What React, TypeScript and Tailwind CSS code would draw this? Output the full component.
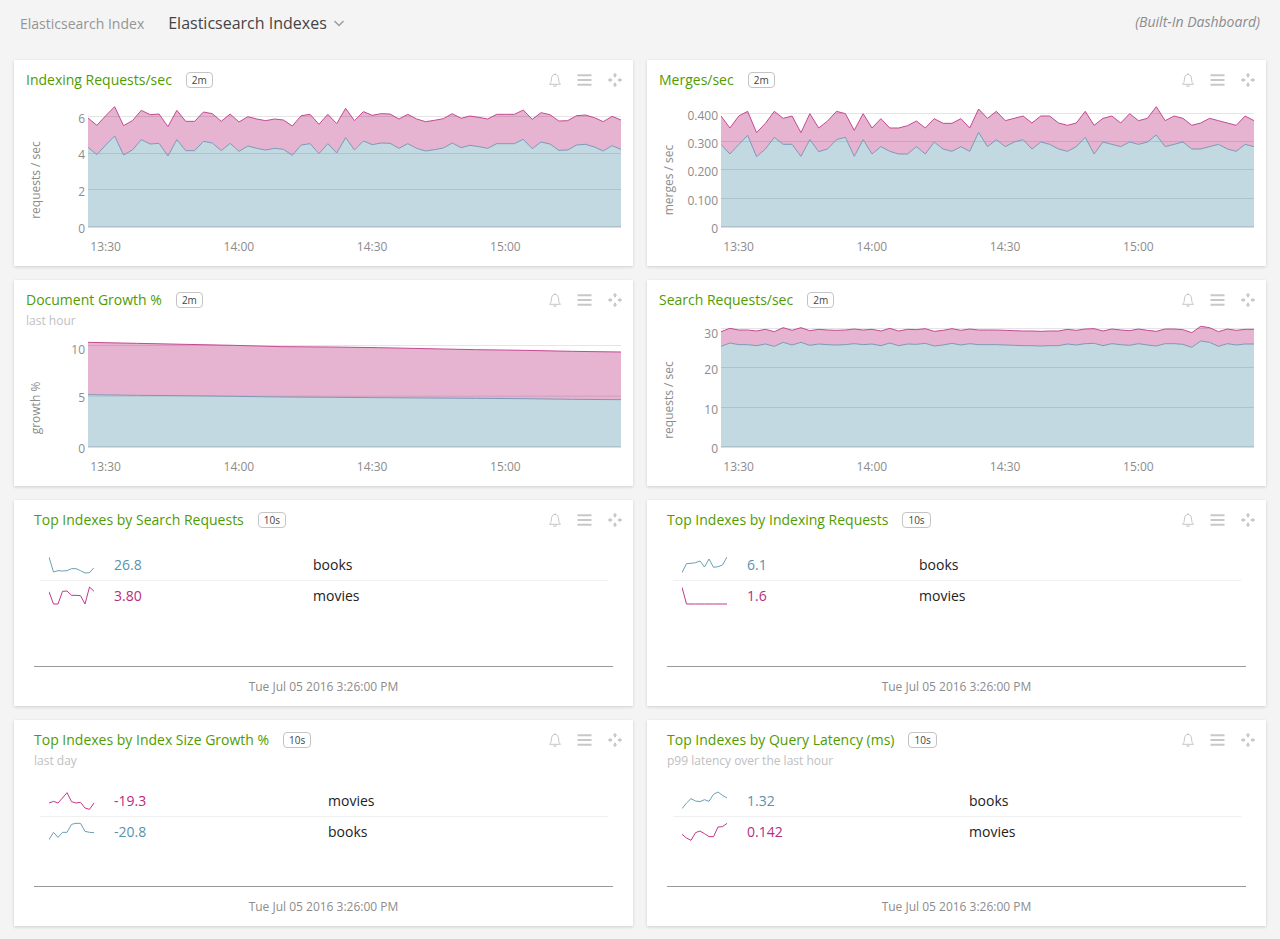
import React from "react";

type Tick = { label: string; line: number; text: number };

type ChartCardProps = {
  title: string;
  subtitle?: string;
  unit: string;
  ticks: Tick[];
  upper: number[];
  lower: number[];
};

type Row = { name: string; value: string; color: "pink" | "blue"; trend: number[] };

type ListCardProps = {
  title: string;
  subtitle?: string;
  rows: Row[];
  valueWidth: string;
};

/* Chart heights are measured in thirds of a pixel from the card's top edge. */
const BASE = 501;

const indexingTop = [
  174, 196, 167, 140, 197, 182, 151, 164, 162, 200, 151, 184, 184, 156, 161, 184, 162, 186, 170, 177,
  182, 177, 180, 198, 167, 163, 193, 163, 191, 145, 182, 155, 166, 161, 162, 177, 163, 177, 185, 181,
  176, 161, 175, 168, 172, 177, 163, 163, 163, 150, 178, 158, 164, 183, 182, 167, 165, 173, 185, 169,
  180,
];

const mergesTop = [
  168, 204, 168, 154, 218, 190, 154, 175, 168, 218, 161, 204, 183, 154, 161, 211, 161, 204, 176, 204,
  204, 197, 183, 204, 176, 190, 190, 176, 204, 147, 175, 154, 182, 175, 168, 189, 168, 168, 189, 196,
  189, 154, 196, 175, 168, 189, 161, 182, 175, 140, 182, 168, 175, 196, 189, 175, 182, 189, 196, 168,
  182,
];

const mergesBottom = [
  253, 282, 254, 226, 290, 267, 232, 253, 253, 289, 239, 275, 267, 239, 232, 289, 239, 282, 260, 274,
  282, 282, 260, 282, 246, 267, 274, 260, 274, 217, 260, 239, 260, 246, 239, 267, 246, 253, 267, 274,
  260, 232, 282, 246, 253, 260, 246, 253, 246, 225, 260, 253, 246, 267, 267, 260, 253, 267, 274, 253,
  260,
];

const searchTop = [
  155, 145, 150, 150, 153, 148, 155, 143, 151, 143, 152, 148, 150, 151, 150, 147, 150, 148, 153, 145,
  153, 148, 149, 146, 154, 151, 146, 151, 147, 150, 150, 150, 151, 152, 153, 153, 154, 153, 153, 148,
  151, 147, 146, 153, 147, 150, 152, 147, 151, 154, 147, 147, 149, 158, 139, 143, 155, 147, 151, 148,
  148,
];

const growthTop = [187, 190, 193, 196, 200, 201, 203, 206, 209, 211, 214, 216];
const growthBottom = [344, 346, 347, 349, 351, 352, 353, 354, 355, 356, 358, 359];

const charts: ChartCardProps[] = [
  {
    title: "Indexing Requests/sec",
    unit: "requests / sec",
    ticks: [
      { label: "6", line: 169, text: 63 },
      { label: "4", line: 280, text: 99 },
      { label: "2", line: 388, text: 136 },
      { label: "0", line: 499, text: 173 },
    ],
    upper: indexingTop,
    lower: indexingTop.map((y) => y + 88),
  },
  {
    title: "Merges/sec",
    unit: "merges / sec",
    ticks: [
      { label: "0.400", line: 160, text: 60 },
      { label: "0.300", line: 244, text: 88 },
      { label: "0.200", line: 328, text: 116 },
      { label: "0.100", line: 415, text: 145 },
      { label: "0", line: 499, text: 173 },
    ],
    upper: mergesTop,
    lower: mergesBottom,
  },
  {
    title: "Document Growth %",
    subtitle: "last hour",
    unit: "growth %",
    ticks: [
      { label: "10", line: 196, text: 74 },
      { label: "5", line: 348, text: 122 },
      { label: "0", line: 499, text: 173 },
    ],
    upper: growthTop,
    lower: growthBottom,
  },
  {
    title: "Search Requests/sec",
    unit: "requests / sec",
    ticks: [
      { label: "30", line: 145, text: 58 },
      { label: "20", line: 262, text: 94 },
      { label: "10", line: 382, text: 134 },
      { label: "0", line: 499, text: 173 },
    ],
    upper: searchTop,
    lower: searchTop.map((y) => y + 44),
  },
];

const lists: ListCardProps[] = [
  {
    title: "Top Indexes by Search Requests",
    valueWidth: "w-[199px]",
    rows: [
      { name: "books", value: "26.8", color: "blue", trend: [6, 51, 47, 48, 47, 41, 41, 47, 54, 53, 38] },
      { name: "movies", value: "3.80", color: "pink", trend: [17, 54, 54, 16, 15, 28, 28, 29, 54, 3, 16] },
    ],
  },
  {
    title: "Top Indexes by Indexing Requests",
    valueWidth: "w-[172px]",
    rows: [
      { name: "books", value: "6.1", color: "blue", trend: [53, 26, 25, 23, 18, 36, 12, 37, 35, 30, 6] },
      { name: "movies", value: "1.6", color: "pink", trend: [4, 54, 54, 54, 54, 54, 54, 54, 54, 54, 54] },
    ],
  },
  {
    title: "Top Indexes by Index Size Growth %",
    subtitle: "last day",
    valueWidth: "w-[214px]",
    rows: [
      { name: "movies", value: "-19.3", color: "pink", trend: [36, 31, 36, 21, 5, 32, 36, 34, 51, 55, 36] },
      { name: "books", value: "-20.8", color: "blue", trend: [53, 31, 46, 31, 31, 7, 4, 4, 28, 31, 32] },
    ],
  },
  {
    title: "Top Indexes by Query Latency (ms)",
    subtitle: "p99 latency over the last hour",
    valueWidth: "w-[222px]",
    rows: [
      { name: "books", value: "1.32", color: "blue", trend: [53, 36, 23, 30, 32, 26, 31, 10, 3, 13, 21] },
      { name: "movies", value: "0.142", color: "pink", trend: [37, 48, 55, 32, 27, 35, 44, 44, 15, 14, 4] },
    ],
  },
];

function BellIcon() {
  return (
    <svg width="14" height="16" viewBox="0 0 14 16" fill="none" stroke="#c6c6c6" aria-hidden="true">
      <path d="M7 1.2v1M1.5 12.3h11c-1.100-1-1.700-2-1.800-4.300-.1-3.300-1.200-5.600-3.700-5.600S3.400 4.700 3.300 8c-.1 2.300-.7 3.300-1.800 4.300z" strokeLinejoin="round" />
      <path d="M5 13.400h4c-.2.900-.9 1.400-2 1.400s-1.800-.5-2-1.400z" fill="#c6c6c6" stroke="none" />
    </svg>
  );
}

function MenuIcon() {
  return (
    <svg width="15" height="16" viewBox="0 0 15 16" stroke="#c8c8c8" strokeWidth="2" aria-hidden="true">
      <path d="M.5 3.200h14M.5 8h14M.5 12.700h14" />
    </svg>
  );
}

function MoveIcon() {
  return (
    <svg width="16" height="16" viewBox="0 0 16 16" fill="#c8c8c8" aria-hidden="true">
      <path d="M8 .8l2.400 2.800H9v1.600H7V3.600H5.600z" />
      <path d="M8 15.200l2.400-2.800H9v-1.600H7v1.600H5.600z" />
      <path d="M.8 8l2.800-2.400V7h1.600v2H3.600v1.400z" />
      <path d="M15.200 8l-2.800-2.400V7h-1.600v2h1.600v1.400z" />
    </svg>
  );
}

function CardHeader({ title, subtitle, interval }: { title: string; subtitle?: string; interval: string }) {
  return (
    <>
      <div className="flex items-center">
        <h2 className="text-sm leading-5 font-medium text-[#4f9c00]">{title}</h2>
        <span className="ml-3.5 h-4 rounded border border-[#c4c4c4] px-[5px] text-[10px] leading-[14px] text-[#444]">
          {interval}
        </span>
        <div className="-mr-0.5 ml-auto flex items-center gap-[15px]">
          <button type="button" aria-label="Create alert">
            <BellIcon />
          </button>
          <button type="button" aria-label="Chart menu">
            <MenuIcon />
          </button>
          <button type="button" aria-label="Move chart">
            <MoveIcon />
          </button>
        </div>
      </div>
      {subtitle && <p className="text-xs leading-[22px] text-[#c0c0c0]">{subtitle}</p>}
    </>
  );
}

function StackedChart({ unit, ticks, upper, lower, subtitle }: ChartCardProps) {
  const top = subtitle ? 60 : 40;
  const last = upper.length - 1;
  const line = (ys: number[]) => ys.map((y, i) => `${i},${y}`).join(" ");
  const reverse = (ys: number[]) => ys.map((y, i) => `${last - i},${ys[last - i]}`).join(" ");
  return (
    <div className="flex pr-3">
      <svg
        className="shrink-0 overflow-visible"
        width="74"
        height={206 - top}
        viewBox={`0 ${top} 74 ${206 - top}`}
        fill="#8c8c8c"
        fontSize="12"
      >
        <text x="0" y="0" textAnchor="middle" transform={`translate(26 ${subtitle ? 128 : 120}) rotate(-90)`}>
          {unit}
        </text>
        {ticks.map((t) => (
          <text key={t.label} x="71" y={t.text} textAnchor="end">
            {t.label}
          </text>
        ))}
      </svg>
      <div className="flex min-w-0 flex-1 flex-col">
        <svg
          className="block w-full"
          height={168 - top}
          viewBox={`0 ${top * 3} ${last} ${504 - top * 3}`}
          preserveAspectRatio="none"
          fill="none"
        >
          <rect x="0" y={BASE} width={last} height="3" fill="#d9dfe1" />
          <polygon points={`${line(upper)} ${reverse(lower)}`} fill="#e6b3d1" />
          <polygon points={`${line(lower)} ${last},${BASE} 0,${BASE}`} fill="#c3d9e2" />
          {ticks.map((t) => (
            <path
              key={t.label}
              d={`M0 ${t.line + 0.5}H${last}`}
              stroke="#000"
              strokeOpacity="0.1"
              shapeRendering="crispEdges"
              vectorEffect="non-scaling-stroke"
            />
          ))}
          <polyline points={line(lower)} stroke="#7c97b7" vectorEffect="non-scaling-stroke" />
          <polyline points={line(upper)} stroke="#c44a93" vectorEffect="non-scaling-stroke" />
        </svg>
        <svg className="block w-full overflow-visible" height="38" fill="#8c8c8c" fontSize="12" textAnchor="middle">
          <text x="3.3%" y="23">13:30</text>
          <text x="28.3%" y="23">14:00</text>
          <text x="53.3%" y="23">14:30</text>
          <text x="78.3%" y="23">15:00</text>
        </svg>
      </div>
    </div>
  );
}

function ChartCard(props: ChartCardProps) {
  return (
    <section className="bg-white shadow-[0_1px_3px_rgba(0,0,0,0.16)]">
      <div className={props.subtitle ? "h-[60px] px-3 pt-2.5" : "h-10 px-3 pt-2.5"}>
        <CardHeader title={props.title} subtitle={props.subtitle} interval="2m" />
      </div>
      <StackedChart {...props} />
    </section>
  );
}

function Sparkline({ trend, stroke }: { trend: number[]; stroke: string }) {
  return (
    <svg className="block" width="45" height="20" viewBox="0 0 135 60" fill="none" aria-hidden="true">
      <polyline points={trend.map((y, i) => `${i * 13.5},${y}`).join(" ")} stroke={stroke} strokeWidth="3" />
    </svg>
  );
}

function ListCard({ title, subtitle, rows, valueWidth }: ListCardProps) {
  return (
    <section className="flex min-h-[206px] flex-col bg-white shadow-[0_1px_3px_rgba(0,0,0,0.16)]">
      <div className={subtitle ? "h-[66px] pt-2.5 pr-3 pl-5" : "h-[50px] pt-2.5 pr-3 pl-5"}>
        <CardHeader title={title} subtitle={subtitle} interval="10s" />
      </div>
      <div className="pr-[25px] pl-[26px]">
        <table className="w-full table-fixed border-collapse text-left text-sm leading-[30px]">
          <tbody>
            {rows.map((row, i) => (
              <tr key={row.name} className={i === 0 ? "border-b border-[#f0f0f0]" : ""}>
                <td className="w-[74px] pl-[9px]">
                  <Sparkline trend={row.trend} stroke={row.color === "blue" ? "#6a9fb5" : "#c2388b"} />
                </td>
                <td
                  className={`${valueWidth} font-medium ${
                    row.color === "blue" ? "text-[#5992ae]" : "text-[#b82c80]"
                  }`}
                >
                  {row.value}
                </td>
                <td className="text-[#222]">{row.name}</td>
              </tr>
            ))}
          </tbody>
        </table>
      </div>
      <p className="mx-5 mt-auto h-10 border-t border-[#999] text-center text-xs leading-10 text-[#8c8c8c]">
        Tue Jul 05 2016 3:26:00 PM
      </p>
    </section>
  );
}

export default function App() {
  return (
    <div className="min-h-screen bg-[#f4f4f4] font-['Open_Sans',sans-serif]">
      <header className="flex h-[60px] items-start pr-5 pl-5">
        <a href="#index" className="mt-3 text-sm leading-6 text-[#959595]">
          Elasticsearch Index
        </a>
        <button type="button" className="mt-[11px] ml-6 flex items-center gap-1.5 text-base leading-6 text-[#444]">
          Elasticsearch Indexes
          <svg width="12" height="8" viewBox="0 0 12 8" fill="none" stroke="#999" strokeWidth="1.3" aria-hidden="true">
            <path d="M1.500 2l4.500 4.500L10.500 2" />
          </svg>
        </button>
        <p className="mt-2.5 ml-auto text-sm leading-6 text-[#8c8c8c] italic">(Built-In Dashboard)</p>
      </header>
      <main className="grid grid-cols-2 gap-3.5 px-3.5 pb-3">
        {charts.map((c) => (
          <ChartCard key={c.title} {...c} />
        ))}
        {lists.map((l) => (
          <ListCard key={l.title} {...l} />
        ))}
      </main>
    </div>
  );
}
